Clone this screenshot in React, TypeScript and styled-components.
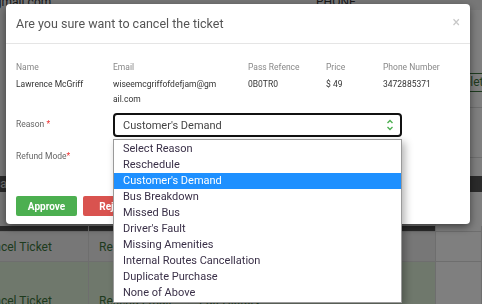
import React from "react";
import styled, { createGlobalStyle } from "styled-components";

const GlobalStyle = createGlobalStyle`
  html, body {
    margin: 0;
    padding: 0;
  }
  body {
    width: 482px;
    height: 304px;
    overflow: hidden;
    font-family: Roboto, "Liberation Sans", Arial, sans-serif;
    background: #efefef;
  }
`

/* ---------- page behind the modal ---------- */

const Page = styled.div`
  width: 512px;
  height: 304px;
  margin-left: -30px;
  overflow: hidden;
  display: flex;
  flex-direction: column;
  background: #efefef;
  color: #333;
  & > * {
    flex-shrink: 0;
  }
`
const TopLine = styled.div`
  display: grid;
  grid-template-columns: 346px 1fr;
  height: 16px;
  margin-top: -6px;
  font-size: 12px;
  line-height: 16px;
  span:first-child {
    padding-left: 6px;
    text-indent: -40px;
    overflow: hidden;
  }
`
const Upper = styled.div`
  display: grid;
  grid-template-columns: 466px 1fr;
  height: 166px;
`
const SideCol = styled.div`
  display: flex;
  flex-direction: column;
  background: #fff;
`
const SideRow = styled.div<{ $h: number; $top?: number }>`
  height: ${(p) => p.$h}px;
  box-sizing: border-box;
  flex-shrink: 0;
  padding-top: ${(p) => p.$top ?? 0}px;
  border-bottom: 1px solid #ddd;
  display: flex;
  align-items: flex-start;
`
const OutlineBtn = styled.span`
  margin-left: 15px;
  padding: 1px 4px;
  border: 1px solid #3c763d;
  color: #3c763d;
  font-size: 12px;
  line-height: 15px;
`
const DarkRow = styled.div<{ $h: number }>`
  height: ${(p) => p.$h}px;
  background: #555;
  color: #eee;
  font-size: 12px;
  line-height: ${(p) => p.$h}px;
  padding-left: 24px;
`
const Table = styled.div`
  display: grid;
  grid-template-columns: 119px 100px 247px 1fr;
`
const Cell = styled.div<{ $tone?: "plain" | "success" | "dark" | "white"; $h: number; $bottom?: boolean }>`
  height: ${(p) => p.$h}px;
  box-sizing: border-box;
  padding: 0 10px ${(p) => (p.$bottom ? "2px" : "0")};
  border-right: 1px solid #ddd;
  border-bottom: 1px solid #ddd;
  display: flex;
  align-items: ${(p) => (p.$bottom ? "flex-end" : "center")};
  white-space: nowrap;
  overflow: hidden;
  font-size: 12px;
  line-height: 16px;
  color: #3c763d;
  background: ${(p) =>
    p.$tone === "success" ? "#dff0d8" : p.$tone === "dark" ? "#555" : p.$tone === "white" ? "#fff" : "#eee"};
`
const Gap = styled.div<{ $h: number }>`
  height: ${(p) => p.$h}px;
  display: grid;
  grid-template-columns: 466px 1fr;
  div:last-child {
    background: #fff;
  }
`

/* ---------- overlay + modal ---------- */

const Overlay = styled.div`
  position: fixed;
  inset: 0;
  background: rgba(0, 0, 0, 0.5);
  z-index: 5;
`
const Modal = styled.div`
  width: 464px;
  margin: 4px 0 0 6px;
  background: #fff;
  border-radius: 4px;
  box-shadow: 0 3px 9px rgba(0, 0, 0, 0.5);
  box-sizing: border-box;
`
const Header = styled.div`
  height: 40px;
  box-sizing: border-box;
  padding: 0 10px 0 10px;
  border-bottom: 1px solid #e5e5e5;
  display: flex;
  align-items: center;
  justify-content: space-between;
`
const Title = styled.h4`
  margin: 0;
  font-size: 12.5px;
  font-weight: 400;
  color: #555;
`
const Close = styled.span`
  font-size: 14px;
  color: #c8c8c8;
  margin-top: -4px;
`
const Body = styled.div`
  padding: 17px 10px 8px;
`
const Info = styled.div`
  display: grid;
  grid-template-columns: 97px 135px 78px 57px 1fr;
  row-gap: 4px;
  font-size: 8.5px;
`
const InfoLabel = styled.div`
  color: #888;
  line-height: 12px;
`
const InfoValue = styled.div<{ $wrap?: boolean }>`
  color: #333;
  line-height: 15px;
  width: ${(p) => (p.$wrap ? "106px" : "auto")};
  word-break: ${(p) => (p.$wrap ? "break-all" : "normal")};
`
const FormRow = styled.div`
  display: grid;
  grid-template-columns: 97px 289px;
  margin-top: 6px;
  & + & {
    margin-top: 8px;
  }
`
const FieldLabel = styled.label`
  padding-top: 5px;
  font-size: 8.5px;
  line-height: 12px;
  color: #666;
  b {
    color: #e33;
    font-weight: 400;
  }
`
const SelectWrap = styled.div`
  position: relative;
`
const SelectBox = styled.div<{ $open?: boolean }>`
  height: 24px;
  box-sizing: border-box;
  border: 2px solid ${(p) => (p.$open ? "#111" : "#ccc")};
  border-radius: 4px;
  padding: 0 6px 0 8px;
  display: flex;
  align-items: center;
  justify-content: space-between;
  font-size: 11px;
  color: #444;
`
const DropList = styled.ul`
  position: absolute;
  top: 26px;
  left: 0;
  right: 0;
  margin: 0;
  padding: 1px 0;
  list-style: none;
  background: #fff;
  border: 1px solid #9a9a9a;
  box-shadow: 3px 3px 8px rgba(0, 0, 0, 0.3);
  z-index: 10;
`
const Option = styled.li<{ $active?: boolean }>`
  height: 16px;
  line-height: 16px;
  padding-left: 9px;
  font-size: 11px;
  color: ${(p) => (p.$active ? "#fff" : "#3a3048")};
  background: ${(p) => (p.$active ? "#1e90ff" : "transparent")};
`
const Footer = styled.div`
  display: flex;
  gap: 6px;
  margin-top: 27px;
`
const Button = styled.button<{ $variant: "approve" | "reject" }>`
  height: 20px;
  width: 61px;
  border: none;
  border-radius: 2px;
  padding: 0;
  font-family: inherit;
  font-size: 10px;
  font-weight: 700;
  color: #fff;
  background: ${(p) => (p.$variant === "approve" ? "#4caf50" : "#d9534f")};
`

const Chevrons = () => (
  <svg width="8" height="14" viewBox="0 0 8 14" fill="none" stroke="#4caf50" strokeWidth="1.4">
    <path d="M1.5 5 L4 2.5 L6.5 5" />
    <path d="M1.5 9 L4 11.5 L6.5 9" />
  </svg>
);

const reasons = [
  "Select Reason",
  "Reschedule",
  "Customer's Demand",
  "Bus Breakdown",
  "Missed Bus",
  "Driver's Fault",
  "Missing Amenities",
  "Internal Routes Cancellation",
  "Duplicate Purchase",
  "None of Above",
];

function App() {
  const selected = "Customer's Demand";

  return (
    <>
      <GlobalStyle />
      <Page>
        <TopLine>
          <span>lawrence@gmail.com</span>
          <span>PHONE</span>
        </TopLine>
        <Upper>
          <div />
          <SideCol>
            <SideRow $h={98} $top={63}>
              <OutlineBtn>Delete</OutlineBtn>
            </SideRow>
            <SideRow $h={50} />
          </SideCol>
        </Upper>
        <DarkRow $h={16}>cancelled</DarkRow>
        <Gap $h={34}>
          <div />
          <div />
        </Gap>
        <Table>
          <Cell $tone="dark" $h={6} />
          <Cell $tone="dark" $h={6} />
          <Cell $tone="dark" $h={6} />
          <Cell $tone="white" $h={6} />
          <Cell $h={30}>Cancel Ticket</Cell>
          <Cell $h={30}>Resend Email</Cell>
          <Cell $h={30}>Edit History</Cell>
          <Cell $tone="white" $h={30} />
          <Cell $tone="success" $h={50} $bottom>Cancel Ticket</Cell>
          <Cell $tone="success" $h={50} $bottom>Resend Email</Cell>
          <Cell $tone="success" $h={50} $bottom>Edit History</Cell>
          <Cell $tone="white" $h={50} />
        </Table>
      </Page>

      <Overlay>
        <Modal>
          <Header>
            <Title>Are you sure want to cancel the ticket</Title>
            <Close>×</Close>
          </Header>
          <Body>
            <Info>
              <InfoLabel>Name</InfoLabel>
              <InfoLabel>Email</InfoLabel>
              <InfoLabel>Pass Refence</InfoLabel>
              <InfoLabel>Price</InfoLabel>
              <InfoLabel>Phone Number</InfoLabel>
              <InfoValue>Lawrence McGriff</InfoValue>
              <InfoValue $wrap>wiseemcgriffofdefjam@gmail.com</InfoValue>
              <InfoValue>0B0TR0</InfoValue>
              <InfoValue>$ 49</InfoValue>
              <InfoValue>3472885371</InfoValue>
            </Info>

            <FormRow>
              <FieldLabel>
                Reason <b>*</b>
              </FieldLabel>
              <SelectWrap>
                <SelectBox $open>
                  <span>{selected}</span>
                  <Chevrons />
                </SelectBox>
                <DropList>
                  {reasons.map((r) => (
                    <Option key={r} $active={r === selected}>
                      {r}
                    </Option>
                  ))}
                </DropList>
              </SelectWrap>
            </FormRow>

            <FormRow>
              <FieldLabel>
                Refund Mode<b>*</b>
              </FieldLabel>
              <SelectWrap>
                <SelectBox>
                  <span>Select Refund Mode</span>
                  <Chevrons />
                </SelectBox>
              </SelectWrap>
            </FormRow>

            <Footer>
              <Button $variant="approve">Approve</Button>
              <Button $variant="reject">Reject</Button>
            </Footer>
          </Body>
        </Modal>
      </Overlay>
    </>
  );
}

export default App;
